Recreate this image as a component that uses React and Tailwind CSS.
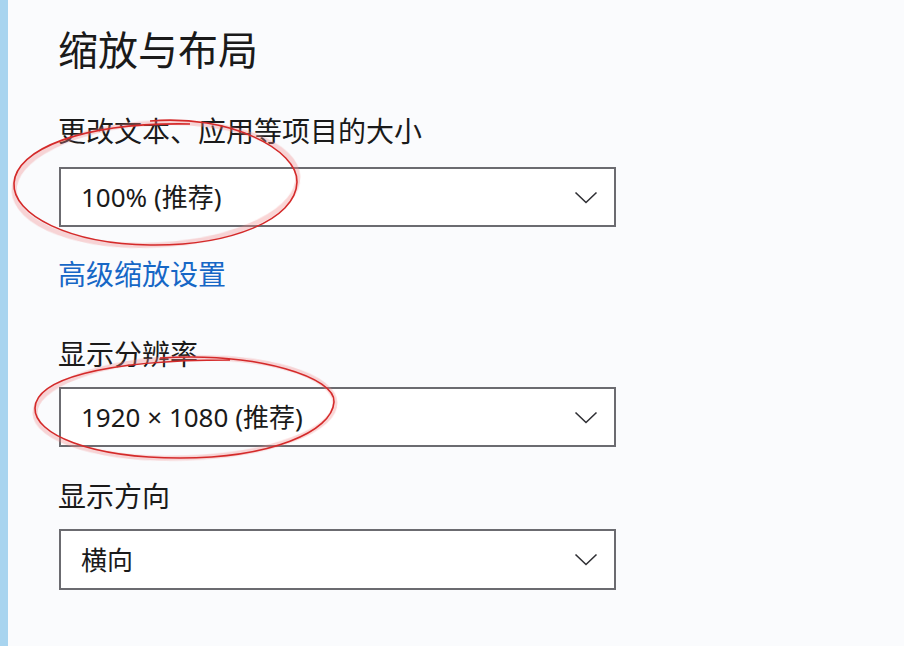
import React from "react";

function Chevron() {
  return (
    <svg width="24" height="13" viewBox="0 0 24 13" fill="none">
      <polyline points="1.5,1.5 12,11.5 22.5,1.5" stroke="#2f2f33" strokeWidth="1.6" />
    </svg>
  );
}

function Dropdown({ children, h = "h-[60px]" }) {
  return (
    <div className={`ml-[1px] w-[557px] ${h} border-2 border-[#6b6b70] bg-white flex items-center justify-between pl-[20px] pr-[16px]`}>
      <span
        className="text-[26px] leading-[26px] text-[#1a1a1a]"
        style={{ fontFamily: "'Noto Sans', 'Noto Sans CJK SC', sans-serif" }}
      >
        {children}
      </span>
      <Chevron />
    </div>
  );
}

export default function App() {
  return (
    <div
      className="relative w-[904px] h-[646px] bg-[#fafbfd] flex overflow-hidden"
      style={{ fontFamily: "'Noto Sans CJK SC', 'Noto Sans', sans-serif" }}
    >
      <div className="w-[8px] h-full bg-[#a8d4ef]" />
      <div className="pl-[50px] flex flex-col text-[#1a1a1a]">
        <h1 className="mt-[28px] text-[40px] leading-[40px] font-normal">缩放与布局</h1>
        <div className="mt-[48px] text-[28px] leading-[28px]">更改文本、应用等项目的大小</div>
        <div className="mt-[23px]">
          <Dropdown>100% (推荐)</Dropdown>
        </div>
        <div className="mt-[32px] text-[28px] leading-[28px] text-[#1667c6]">高级缩放设置</div>
        <div className="mt-[52px] text-[28px] leading-[28px]">显示分辨率</div>
        <div className="mt-[20px]">
          <Dropdown>1920 × 1080 (推荐)</Dropdown>
        </div>
        <div className="mt-[34px] text-[28px] leading-[28px]">显示方向</div>
        <div className="mt-[20px]">
          <Dropdown h="h-[61px]">横向</Dropdown>
        </div>
      </div>
      <svg className="absolute inset-0 pointer-events-none" width="904" height="646" viewBox="0 0 904 646">
        <g opacity="0.35">
          <ellipse cx="156" cy="184" rx="142" ry="61" transform="rotate(-3 156 184)" fill="none" stroke="#f08a8a" strokeWidth="5" />
          <ellipse cx="185" cy="408" rx="150" ry="50" transform="rotate(-2 185 408)" fill="none" stroke="#f08a8a" strokeWidth="5" />
        </g>
        <path
          d="M 150 121 C 230 114 298 150 297 182 C 296 220 230 246 150 245 C 70 244 12 215 14 183 C 16 150 80 122 190 124"
          fill="none"
          stroke="#d42a2a"
          strokeWidth="1.6"
        />
        <path
          d="M 160 358 C 260 352 336 378 334 402 C 332 432 270 458 180 458 C 90 458 34 434 35 408 C 36 380 100 360 230 360"
          fill="none"
          stroke="#d42a2a"
          strokeWidth="1.6"
        />
      </svg>
    </div>
  );
}
